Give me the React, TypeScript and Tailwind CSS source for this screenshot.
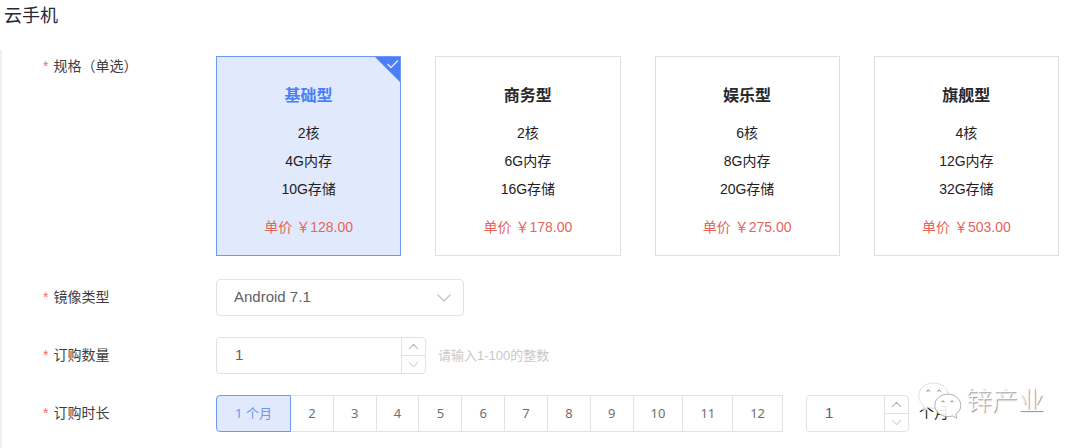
import React, { useState } from 'react';
import { ChevronDown, ChevronUp } from 'lucide-react';

interface Plan {
  name: string;
  specs: string[];
  price: string;
}

const PLANS: Plan[] = [
  { name: '基础型', specs: ['2核', '4G内存', '10G存储'], price: '128.00' },
  { name: '商务型', specs: ['2核', '6G内存', '16G存储'], price: '178.00' },
  { name: '娱乐型', specs: ['6核', '8G内存', '20G存储'], price: '275.00' },
  { name: '旗舰型', specs: ['4核', '12G内存', '32G存储'], price: '503.00' },
];

const MONTHS = [1, 2, 3, 4, 5, 6, 7, 8, 9, 10, 11, 12];

interface FormRowProps {
  label: string;
  htmlFor?: string;
  id?: string;
  alignTop?: boolean;
  children: React.ReactNode;
}

const FormRow: React.FC<FormRowProps> = ({ label, htmlFor, id, alignTop, children }) => (
  <div className="flex items-start">
    <label
      id={id}
      htmlFor={htmlFor}
      className={`flex w-[173px] shrink-0 gap-[5px] text-sm text-[#3c3e42] ${alignTop ? '' : 'pt-2'}`}
    >
      <span className="text-[#f56c6c]">*</span>
      {label}
    </label>
    <div className="flex min-w-0 flex-1 items-center">{children}</div>
  </div>
);

const PlanCard: React.FC<{ plan: Plan; selected: boolean; onSelect: () => void }> = ({ plan, selected, onSelect }) => (
  <button
    type="button"
    aria-pressed={selected}
    onClick={onSelect}
    className={`relative border pt-[25px] pb-[14px] text-center text-sm leading-7 ${
      selected ? 'border-[#6e98f8] bg-[#e1eafc]' : 'border-[#dfdfdf] bg-white'
    }`}
  >
    {selected && (
      <svg className="absolute top-0 right-0 h-[25px] w-[25px]" viewBox="0 0 25 25" fill="none">
        <path d="M0 0H25V25Z" fill="#4a7ff7" />
        <path d="M12.5 7L16 10.5L23 3.5" stroke="#e1eafc" strokeWidth="1.4" />
      </svg>
    )}
    <span className={`block text-base leading-7 font-bold ${selected ? 'text-[#4a7ff7]' : 'text-[#28292c]'}`}>
      {plan.name}
    </span>
    <span className="mt-[9px] block text-[#1f2023]">
      {plan.specs.map((spec) => (
        <span key={spec} className="block">{spec}</span>
      ))}
    </span>
    <span className="mt-[10px] block text-[#e5645a]">单价 ￥{plan.price}</span>
  </button>
);

interface NumberBoxProps {
  id: string;
  label?: string;
  className: string;
  value: number;
  onChange: (value: number) => void;
}

const NumberBox: React.FC<NumberBoxProps> = ({ id, label, className, value, onChange }) => (
  <div className={`flex h-[37px] shrink-0 overflow-hidden rounded border border-[#dfe2e9] bg-white ${className}`}>
    <input
      id={id}
      aria-label={label}
      inputMode="numeric"
      value={value}
      onChange={(e) => onChange(Number(e.target.value) || 1)}
      className="w-full min-w-0 flex-1 pl-[18px] text-[15px] text-[#606266] outline-none"
    />
    <div className="flex w-6 shrink-0 flex-col border-l border-[#dfe2e9] text-[#b4b7bd]">
      <button
        type="button"
        aria-label="增加"
        onClick={() => onChange(Math.min(100, value + 1))}
        className="flex flex-1 items-center justify-center border-b border-[#dfe2e9]"
      >
        <ChevronUp size={17} strokeWidth={1.6} />
      </button>
      <button
        type="button"
        aria-label="减少"
        onClick={() => onChange(Math.max(1, value - 1))}
        className="flex flex-1 items-center justify-center text-[#cfd2d8]"
      >
        <ChevronDown size={17} strokeWidth={1.6} />
      </button>
    </div>
  </div>
);

const Watermark: React.FC = () => (
  <div className="pointer-events-none absolute right-9 bottom-7 flex items-center gap-1">
    <svg width="44" height="38" viewBox="0 0 44 38" fill="none">
      <path
        d="M15.5 1C7 1 .8 6.8.8 13.8c0 4 2 7.3 5.3 9.7L4.6 28l5.2-2.6c1.9.5 3.8.8 5.8.8 8.3 0 14.9-5.5 14.9-12.4S23.8 1 15.5 1Z"
        fill="#fff"
        fillOpacity=".94"
        stroke="#c9c9c9"
        strokeWidth=".6"
      />
      <path d="M8.5 9.500q1.800-2.800 3.600 0M19.500 9.500q1.800-2.800 3.600 0" stroke="#777" strokeWidth="1" />
      <path
        d="M29.8 12.2c-7.3 0-13 5-13 11.2s5.7 11.2 13 11.2c1.6 0 3.2-.2 4.6-.7l4.5 2.3-1.200-3.900c3.200-2.100 5.100-5.300 5.100-8.900 0-6.200-5.800-11.200-13-11.200Z"
        fill="#fff"
        fillOpacity=".9"
        stroke="#8e8e8e"
        strokeWidth=".7"
      />
      <path d="M23.5 20q1.500-2.300 3 0M32.500 20q1.500-2.300 3 0" stroke="#777" strokeWidth="1" />
    </svg>
    <span className="text-[26px] leading-9 font-light text-white [text-shadow:1px_1px_1px_#888]">锌产业</span>
  </div>
);

const App: React.FC = () => {
  const [plan, setPlan] = useState(0);
  const [quantity, setQuantity] = useState(1);
  const [months, setMonths] = useState(1);
  const [custom, setCustom] = useState(1);

  return (
    <div className="relative flex min-h-screen flex-col bg-white font-['Liberation_Sans','Noto_Sans_CJK_SC',sans-serif]">
      <h1 className="px-1 pt-[2px] pb-5 text-lg leading-7 text-[#25283a]">云手机</h1>

      <form className="flex flex-1 flex-col gap-[21px] border-l-2 border-[#eef0f5] pt-[6px] pr-[21px] pb-4 pl-[41px]">
        <FormRow label="规格（单选）" id="plan-label" alignTop>
          <div role="group" aria-labelledby="plan-label" className="mb-[2px] grid w-full grid-cols-4 gap-[34px]">
            {PLANS.map((item, i) => (
              <PlanCard key={item.name} plan={item} selected={plan === i} onSelect={() => setPlan(i)} />
            ))}
          </div>
        </FormRow>

        <FormRow label="镜像类型" htmlFor="image">
          <div className="relative w-[248px]">
            <select
              id="image"
              className="h-[37px] w-full appearance-none rounded border border-[#dfe2e9] bg-white pl-[17px] text-[15px] text-[#606266] outline-none"
            >
              <option>Android 7.1</option>
            </select>
            <ChevronDown
              size={24}
              strokeWidth={1.3}
              className="pointer-events-none absolute top-[7px] right-2 text-[#c0c4cc]"
            />
          </div>
        </FormRow>

        <FormRow label="订购数量" htmlFor="quantity">
          <NumberBox id="quantity" className="w-[210px]" value={quantity} onChange={setQuantity} />
          <span className="ml-3 text-[13px] text-[#c8c8c8]">请输入1-100的整数</span>
        </FormRow>

        <FormRow label="订购时长" id="months-label">
          <div
            role="group"
            aria-labelledby="months-label"
            className="flex h-[37px] w-[567px] font-['Noto_Sans','Noto_Sans_CJK_SC',sans-serif] text-[13px] text-[#707070]"
          >
            {MONTHS.map((m) => (
              <button
                key={m}
                type="button"
                aria-pressed={months === m}
                onClick={() => setMonths(m)}
                className={`border-y border-r first:rounded-l-sm first:border-l ${
                  m === 1 ? 'w-[75px] shrink-0' : m < 10 ? 'w-[43px]' : 'w-[50px]'
                } ${months === m ? 'border-[#6e98f8] bg-[#e1eafc] text-[#6e94f8]' : 'border-[#e2e2e2]'}`}
              >
                {m === 1 ? '1 个月' : m}
              </button>
            ))}
          </div>
          <div className="ml-[23px] flex items-center gap-[10px]">
            <NumberBox id="custom" label="自定义月数" className="w-[103px]" value={custom} onChange={setCustom} />
            <span className="text-[15px] text-[#28292c]">个月</span>
          </div>
        </FormRow>
      </form>

      <Watermark />
    </div>
  );
};

export default App;
